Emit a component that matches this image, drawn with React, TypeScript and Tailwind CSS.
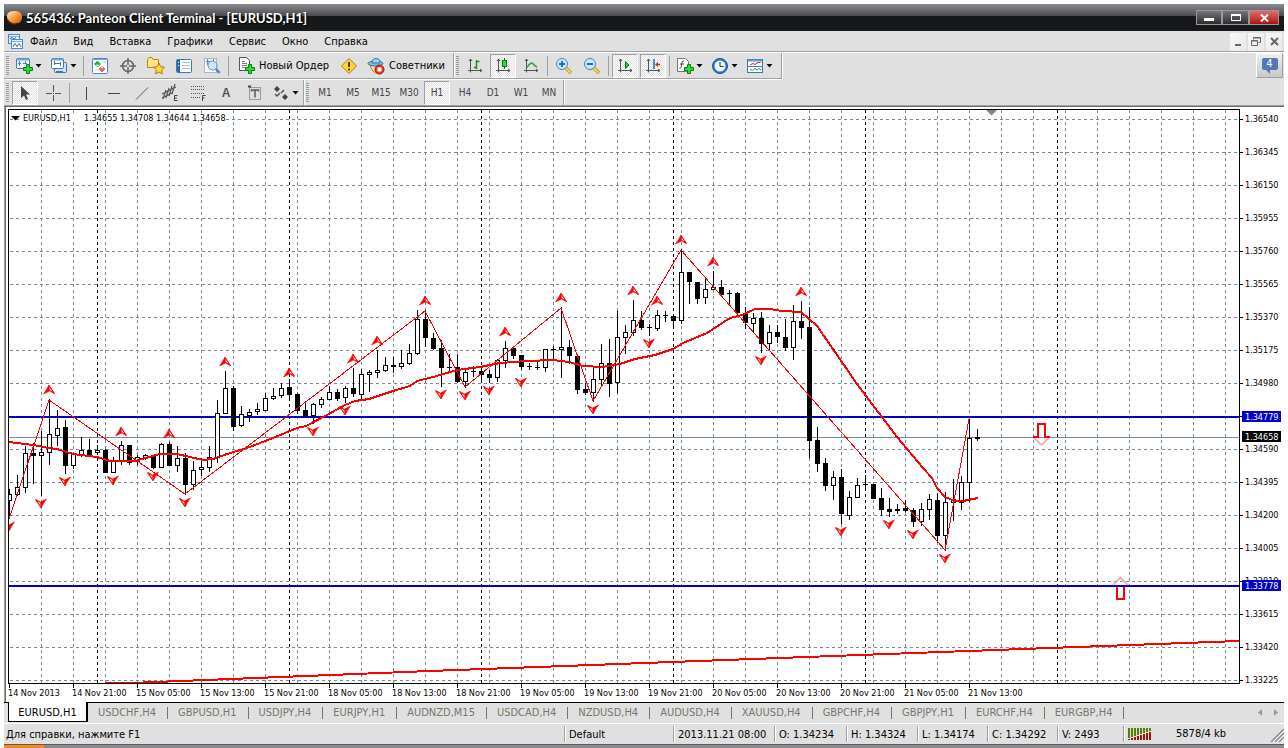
import type { ReactNode } from "react";

/* ── Chart data ─────────────────────────────────────────────────────── */

// One bar every 8px: [high, low, body top, body bottom, filled]
const CANDLES: [number, number, number, number, 0 | 1][] = [
  [489, 519, 494, 501, 0], [475, 496, 487, 495, 0], [446, 493, 453, 488, 0], [443, 484, 453, 456, 1],
  [431, 496, 452, 456, 0], [399, 465, 434, 453, 0], [410, 446, 428, 436, 0], [420, 474, 427, 466, 1],
  [454, 469, 454, 466, 0], [437, 457, 450, 455, 0], [439, 455, 450, 455, 1], [445, 454, 450, 453, 0],
  [449, 473, 450, 473, 1], [457, 473, 461, 473, 0], [441, 465, 445, 462, 0], [445, 465, 445, 463, 1],
  [455, 465, 457, 462, 0], [454, 460, 455, 458, 0], [455, 469, 455, 468, 1], [443, 468, 444, 468, 0],
  [442, 466, 444, 466, 1], [446, 472, 458, 466, 0], [453, 495, 458, 485, 1], [461, 490, 470, 485, 0],
  [458, 476, 467, 470, 0], [446, 472, 457, 468, 0], [400, 463, 413, 458, 0], [371, 414, 388, 414, 0],
  [386, 431, 388, 427, 1], [406, 427, 414, 426, 0], [409, 422, 412, 416, 0], [403, 415, 409, 412, 0],
  [393, 411, 398, 411, 0], [388, 400, 396, 399, 0], [383, 398, 388, 396, 0], [379, 401, 387, 395, 1],
  [393, 414, 394, 411, 1], [403, 417, 410, 416, 1], [403, 424, 404, 416, 0], [397, 408, 399, 405, 0],
  [386, 400, 392, 400, 0], [389, 401, 392, 399, 1], [386, 403, 388, 398, 0], [368, 397, 388, 394, 1],
  [369, 400, 374, 395, 0], [370, 392, 372, 375, 0], [350, 378, 370, 373, 0], [357, 372, 365, 371, 0],
  [357, 373, 365, 367, 1], [350, 369, 363, 367, 0], [344, 365, 353, 364, 0], [310, 355, 319, 354, 0],
  [310, 347, 319, 338, 1], [333, 350, 338, 349, 1], [340, 387, 348, 368, 1], [354, 372, 367, 368, 1],
  [354, 383, 367, 382, 1], [369, 388, 372, 382, 0], [366, 377, 371, 372, 1], [367, 382, 371, 375, 1],
  [370, 383, 374, 378, 1], [359, 382, 360, 378, 0], [341, 368, 348, 361, 0], [346, 359, 348, 356, 1],
  [355, 370, 355, 367, 1], [363, 370, 366, 367, 1], [360, 370, 367, 368, 1], [349, 372, 349, 368, 0],
  [346, 360, 349, 350, 1], [307, 378, 347, 350, 0], [340, 364, 347, 356, 1], [356, 394, 356, 390, 1],
  [383, 395, 389, 393, 1], [368, 402, 379, 393, 0], [344, 385, 363, 380, 0], [339, 397, 363, 384, 1],
  [311, 393, 337, 383, 0], [325, 354, 332, 338, 0], [300, 336, 320, 333, 0], [311, 330, 320, 328, 1],
  [324, 336, 327, 328, 1], [310, 331, 315, 329, 0], [311, 322, 315, 316, 1], [314, 327, 316, 321, 1],
  [249, 324, 272, 321, 0], [272, 304, 272, 282, 1], [282, 304, 282, 299, 1], [279, 304, 289, 298, 0],
  [271, 290, 287, 290, 0], [280, 296, 287, 295, 1], [290, 304, 293, 294, 1], [292, 315, 293, 313, 1],
  [307, 329, 313, 323, 1], [313, 333, 318, 324, 0], [312, 353, 318, 344, 1], [325, 350, 332, 344, 0],
  [325, 343, 332, 337, 1], [319, 351, 337, 348, 1], [305, 360, 321, 348, 0], [301, 339, 321, 328, 1],
  [307, 458, 327, 441, 1], [427, 472, 440, 464, 1], [458, 491, 463, 486, 1], [471, 500, 477, 486, 0],
  [469, 524, 477, 514, 1], [491, 520, 497, 516, 0], [478, 498, 485, 498, 0], [475, 489, 484, 485, 1],
  [484, 499, 484, 499, 1], [488, 516, 498, 510, 1], [498, 517, 509, 512, 1], [504, 514, 509, 511, 1],
  [500, 512, 508, 511, 1], [508, 527, 510, 522, 1], [503, 526, 509, 522, 0], [494, 520, 499, 510, 0],
  [493, 543, 500, 536, 1], [492, 551, 502, 536, 0], [479, 521, 499, 503, 0], [476, 510, 482, 503, 0],
  [419, 502, 438, 483, 0], [429, 441, 437, 439, 1],
];

// Fractals: [x, top]
const FRACTALS_UP = [
  [49, 385], [121, 427], [169, 429], [225, 357], [289, 368], [353, 354], [377, 336], [425, 296], [505, 327],
  [561, 293], [633, 286], [657, 296], [681, 235], [713, 257], [801, 287],
];
const FRACTALS_DOWN = [
  [9, 522], [41, 499], [65, 477], [113, 476], [153, 472], [185, 498], [313, 427], [345, 406], [441, 390], [465, 391],
  [489, 386], [521, 378], [593, 405], [649, 339], [761, 356], [841, 527], [889, 520], [913, 530], [945, 554],
];

const ZIGZAG = "9,519 49,400 185,494 425,311 465,387 561,308 593,401 681,250 945,550 969,419";
const MOVING_AVERAGE =
  "9,442 33,445 49,448 57,449 73,454 97,457 110,461 135,461 160,454 177,454 203,460 213,459 227,454 247,448 273,438 297,428 306,426 327,415 345,405 355,401 369,399 393,391 410,386 417,381 433,377 457,370 480,367 500,363 527,361 553,360 569,362 583,366 602,367 620,364 635,359 655,355 673,349 683,343 707,333 730,318 742,315 755,309 770,309 782,311 801,312 817,326 833,349 857,384 897,437 923,468 932,478 937,488 945,497 955,501 963,501 978,498";
const SLOW_AVERAGE = "105,683 131,683 430,671 860,655 1239,641";

const TIMES = [
  "14 Nov 2013", "14 Nov 21:00", "15 Nov 05:00", "15 Nov 13:00", "15 Nov 21:00", "18 Nov 05:00", "18 Nov 13:00",
  "18 Nov 21:00", "19 Nov 05:00", "19 Nov 13:00", "19 Nov 21:00", "20 Nov 05:00", "20 Nov 13:00", "20 Nov 21:00",
  "21 Nov 05:00", "21 Nov 13:00",
];

const LEVELS = [
  { y: 417, label: "1.34779", fill: "#0000c8" },
  { y: 437, label: "1.34658", fill: "#000000" },
  { y: 586, label: "1.33778", fill: "#0000c8" },
];

const range = (n: number) => Array.from({ length: n }, (_, i) => i);

function Chart() {
  return (
    <svg
      viewBox="4 107 1280 595"
      className="block h-auto w-full bg-white font-['DejaVu_Sans_Condensed','Noto_Sans',sans-serif] text-[9px]"
      role="img"
      aria-label="EURUSD,H1"
    >
      <defs>
        <clipPath id="plot">
          <rect x="9" y="110" width="1230" height="573" />
        </clipPath>
      </defs>

      <g shapeRendering="crispEdges">
        {/* grid */}
        <g stroke="#778899" strokeDasharray="3 3" fill="none">
          {range(38).map((i) => (
            <path key={i} d={`M${41.5 + 32 * i} 110V683`} />
          ))}
          {range(18).map((i) => (
            <path key={i} d={`M10 ${119.5 + 33 * i}H1239`} />
          ))}
        </g>
        <g stroke="#000" strokeDasharray="3 3">
          {range(6).map((i) => (
            <path key={i} d={`M${97.5 + 192 * i} 110V683`} />
          ))}
        </g>

        <g clipPath="url(#plot)">
          <path d="M9 437.5H1239" stroke="#778899" />
          <path d="M9 417H1239M9 586H1239" stroke="#0000c8" strokeWidth="2" />

          {CANDLES.map(([high, low, top, bottom, filled], i) => {
            const x = 9 + 8 * i;
            return (
              <g key={i}>
                <rect x={x} y={high} width="1" height={low - high} />
                <rect x={x - 2} y={top} width="5" height={Math.max(bottom - top, 1)} />
                {!filled && <rect x={x - 1} y={top + 1} width="3" height={bottom - top - 2} fill="#fff" />}
              </g>
            );
          })}

          <polyline points={ZIGZAG} fill="none" stroke="#f00" />
          <polyline points={MOVING_AVERAGE} fill="none" stroke="#f00" strokeWidth="2" />
          <polyline points={SLOW_AVERAGE} fill="none" stroke="#f00" strokeWidth="2" />
        </g>

        {/* frame and axis ticks */}
        <path d="M8.5 684V109.5H1239.5V683.5H8" fill="none" stroke="#000" />
        {TIMES.map((t, i) => (
          <path key={t} d={`M${9.5 + 64 * i} 684v4`} stroke="#000" />
        ))}
        {range(18).map((i) => (
          <path key={i} d={`M1240 ${119.5 + 33 * i}h3`} stroke="#000" />
        ))}
        <path d="M4.5 107V702" stroke="#a0a0a0" />
        <path d="M5.5 107V702" stroke="#6d6d64" />
      </g>

      {/* fractals */}
      <g clipPath="url(#plot)" fill="none" stroke="#f00">
        {FRACTALS_UP.map(([x, y]) => (
          <g key={`${x}-${y}`} transform={`translate(${x} ${y})`}>
            <path d="M0 0L-2.500 4.500L-5.500 9L.5 6Z" fill="#f00" strokeWidth=".6" />
            <path d="M0 .5L3 5L5.500 8.500L.5 5.500" strokeWidth="1.200" />
          </g>
        ))}
        {FRACTALS_DOWN.map(([x, y]) => (
          <g key={`${x}-${y}`} transform={`translate(${x} ${y})`}>
            <path d="M0 9L2.500 4.500L5.500 0L-.5 3Z" fill="#f00" strokeWidth=".6" />
            <path d="M0 8.500L-3 4L-5.500 .5L-.5 3.500" strokeWidth="1.200" />
          </g>
        ))}
      </g>

      {/* signal arrows */}
      <g fill="none">
        <path d="M1034 438L1041.500 445L1049 438" stroke="#ff9a9a" strokeWidth="1.500" />
        <path d="M1033 437H1038V424H1045V437H1050" stroke="#f00" strokeWidth="2" />
        <path d="M1113 585L1120.500 577.500L1128 585" stroke="#ff9a9a" strokeWidth="1.500" />
        <path d="M1117 587V599H1124V587" stroke="#f00" strokeWidth="2" />
      </g>
      <path d="M986 110H997L991.500 115.500Z" fill="#778899" />

      {/* labels */}
      <path d="M11 116H20L15.500 120.500Z" />
      <rect x="22" y="113" width="204" height="9" fill="#fff" />
      <text x="23" y="121">EURUSD,H1</text>
      <text x="84" y="121">1.34655 1.34708 1.34644 1.34658</text>
      {range(18).map((i) => (
        <text key={i} x="1245" y={122 + 33 * i}>
          {(1.3654 - 0.00195 * i).toFixed(5)}
        </text>
      ))}
      {LEVELS.map((level) => (
        <g key={level.label}>
          <rect x="1242" y={level.y - 6} width="39" height="11" fill={level.fill} />
          <text x="1245" y={level.y + 3} fill="#fff">
            {level.label}
          </text>
        </g>
      ))}
      {TIMES.map((t, i) => (
        <text key={t} x={8 + 64 * i} y="696">
          {t}
        </text>
      ))}
    </svg>
  );
}

/* ── Icons ──────────────────────────────────────────────────────────── */

function Icon({ children }: { children: ReactNode }) {
  return (
    <svg viewBox="0 0 18 18" className="size-[18px] shrink-0" fill="none" aria-hidden="true">
      {children}
    </svg>
  );
}

const GreenPlus = () => (
  <path d="M11.500 7.500H14.500V10.500H17.500V13.500H14.500V16.500H11.500V13.500H8.500V10.500H11.500Z" fill="#2fd83a" stroke="#0a7d12" />
);

const Axes = () => <path d="M4.500 2V15.500M2 13.500H16M3 4L4.500 2L6 4M14 12L16 13.500L14 15" stroke="#555" />;

const icons = {
  newChart: (
    <Icon>
      <rect x="1.500" y="1.500" width="13" height="10" rx="1" fill="#eef6ff" stroke="#3a78b8" />
      <path d="M2 2.500H14" stroke="#6fa8dc" strokeWidth="2" />
      <path d="M4.500 4V9M3 6.500H6M10.500 4V7M8 6.500H12" stroke="#5b7fa3" />
      <GreenPlus />
    </Icon>
  ),
  profiles: (
    <Icon>
      <rect x="4.500" y="5.500" width="12" height="10" rx="1" fill="#cfe2f6" stroke="#3a78b8" />
      <rect x="1.500" y="1.500" width="12" height="10" rx="1" fill="#fff" stroke="#3a78b8" />
      <path d="M2 2.500H13" stroke="#6fa8dc" strokeWidth="2" />
      <path d="M4.500 4V8M4 6.500H10.500M10.500 5V9M6 14.500H13" stroke="#4a77a5" />
    </Icon>
  ),
  marketWatch: (
    <Icon>
      <rect x="1.500" y="1.500" width="15" height="15" rx="1" fill="#fff" stroke="#4a86c5" />
      <path d="M2 2.500H16" stroke="#6fa8dc" />
      <path d="M6.500 4L9.500 7L6.500 10L3.500 7Z" fill="#1fae2c" stroke="#0d7a18" strokeWidth=".5" />
      <path d="M11 15L14 12L11 9L8 12Z" fill="#f0703a" stroke="#b23a10" strokeWidth=".5" />
      <path d="M5.500 7.500H7.500V9.500H5.500ZM10 9.500H12V11H10Z" fill="#fff" />
      <path d="M12 5H15M4 13H7" stroke="#b8c8d8" />
    </Icon>
  ),
  dataWindow: (
    <Icon>
      <circle cx="9" cy="9" r="5.500" stroke="#666" strokeWidth="1.500" />
      <path d="M9 1V8M9 10V17M1 9H8M10 9H17" stroke="#666" strokeWidth="1.500" />
    </Icon>
  ),
  navigator: (
    <Icon>
      <path d="M.5 2.500L2 .5H5L6 2.500H11.500V10.500H.5Z" fill="#ffe588" stroke="#b58b1c" />
      <path d="M12 6L13.700 9.700L17.500 10.200L14.700 12.900L15.400 16.900L12 15L8.600 16.900L9.300 12.900L6.500 10.200L10.300 9.700Z" fill="#ffd83c" stroke="#a97b12" />
    </Icon>
  ),
  terminal: (
    <Icon>
      <rect x="1.500" y="2.500" width="15" height="13" rx="1" fill="#fff" stroke="#3a78b8" />
      <rect x="2" y="3" width="3" height="12" fill="#2a66b0" />
      <path d="M7 5.500H15M7 8.500H15M7 11.500H15" stroke="#9cc0e8" />
      <path d="M3 5.500H4M3 8.500H4" stroke="#fff" />
    </Icon>
  ),
  tester: (
    <Icon>
      <rect x="1.500" y="1.500" width="12" height="14" fill="#f6f9fc" stroke="#a9b6c4" />
      <path d="M4.500 2V8M10.500 2V6M3 4.500H7" stroke="#6c8aa8" />
      <circle cx="9.500" cy="8.500" r="4.500" fill="#cfe6fa" stroke="#5f8fbe" />
      <path d="M13 12L16.500 16" stroke="#4d86c2" strokeWidth="2.500" />
    </Icon>
  ),
  newOrder: (
    <Icon>
      <path d="M2.500 .5H9.500L12.500 3.500V13.500H2.500Z" fill="#fff" stroke="#555" />
      <path d="M5 4.500H8M5 6.500H10M5 8.500H10M5 10.500H8" stroke="#777" />
      <GreenPlus />
    </Icon>
  ),
  warning: (
    <Icon>
      <path d="M9 1.500L16.500 9L9 16.500L1.500 9Z" fill="#ffd42e" stroke="#a97f10" strokeLinejoin="round" />
      <path d="M9 5V10M9 11.500V13.500" stroke="#4f3a00" strokeWidth="2" />
    </Icon>
  ),
  expert: (
    <Icon>
      <path d="M3 8H14L13 14L9 16.500L5 13Z" fill="#ffe08a" stroke="#b98a1c" />
      <ellipse cx="8.500" cy="6.500" rx="7.500" ry="2.500" fill="#7fbce6" stroke="#2f78ae" />
      <path d="M5 6C5 3 6 1.500 9 1.500S13 3 13 6Z" fill="#9fd0f2" stroke="#2f78ae" />
      <circle cx="12.500" cy="12.500" r="4.500" fill="#e23a22" stroke="#a51d0c" />
      <rect x="10.500" y="10.500" width="4" height="4" fill="#fff" />
    </Icon>
  ),
  bars: (
    <Icon>
      <Axes />
      <path d="M10.500 3V12M8 10.500H10M11 4.500H13.500" stroke="#1c8a28" strokeWidth="1.500" />
    </Icon>
  ),
  candles: (
    <Icon>
      <Axes />
      <path d="M10.500 1V12" stroke="#0a6a14" />
      <rect x="8.500" y="3.500" width="4" height="6" fill="#35d640" stroke="#0a7d12" />
    </Icon>
  ),
  line: (
    <Icon>
      <Axes />
      <path d="M4 11C7 9 8 5 10 6S12 9 15 10" stroke="#2f9a3a" strokeWidth="1.500" />
    </Icon>
  ),
  zoomIn: (
    <Icon>
      <path d="M11 11L16 16" stroke="#c99a16" strokeWidth="3.500" />
      <path d="M11 11L15.500 15.500" stroke="#ffe27a" strokeWidth="1.500" />
      <circle cx="7" cy="7" r="5.500" fill="#cbe8fb" stroke="#3f86c0" />
      <path d="M7 4V10M4 7H10" stroke="#2a6ea8" strokeWidth="2" />
    </Icon>
  ),
  zoomOut: (
    <Icon>
      <path d="M11 11L16 16" stroke="#c99a16" strokeWidth="3.500" />
      <path d="M11 11L15.500 15.500" stroke="#ffe27a" strokeWidth="1.500" />
      <circle cx="7" cy="7" r="5.500" fill="#cbe8fb" stroke="#3f86c0" />
      <path d="M4 7H10" stroke="#2a6ea8" strokeWidth="2" />
    </Icon>
  ),
  autoScroll: (
    <Icon>
      <Axes />
      <path d="M9.500 4.500L13 8L9.500 11.500Z" fill="#2fc43a" stroke="#0a7d12" />
    </Icon>
  ),
  chartShift: (
    <Icon>
      <Axes />
      <path d="M10 2V12" stroke="#2468a8" strokeWidth="1.500" />
      <path d="M16 7.500H13" stroke="#b23a18" strokeWidth="1.500" />
      <path d="M11 7.500L14 5V10Z" fill="#b23a18" />
    </Icon>
  ),
  indicators: (
    <Icon>
      <path d="M1.500 1.500H9.500L12.500 4.500V14.500H1.500Z" fill="#fff" stroke="#777" />
      <path d="M8 4C6 3.500 6 5 5.500 8S5 11.500 3.500 11M4 7H8" stroke="#444" />
      <GreenPlus />
    </Icon>
  ),
  periods: (
    <Icon>
      <circle cx="9" cy="9" r="7.500" fill="#2c7cd6" stroke="#174f94" />
      <circle cx="9" cy="9" r="5.500" fill="#eef6ff" />
      <path d="M9 5V9.500H12.500" stroke="#333" />
    </Icon>
  ),
  templates: (
    <Icon>
      <rect x="1.500" y="2.500" width="15" height="13" fill="#fff" stroke="#3a78b8" />
      <path d="M2 3.500H16" stroke="#5a9ad8" strokeWidth="2" />
      <path d="M2 9.500H16" stroke="#3a78b8" />
      <path d="M4 8L7 6.500L9 7.500L12 5.500H14.500" stroke="#b03a20" />
      <path d="M4 12L6.500 13.500L9 11.500L11 13L13 11.500L15 13" stroke="#2f9a3a" />
    </Icon>
  ),
  cursor: (
    <Icon>
      <path d="M5 2V14L8 11.500L10 16L12 15L10 10.500H14Z" fill="#444" />
    </Icon>
  ),
  crosshair: (
    <Icon>
      <path d="M9.500 1V8M9.500 11V17M2 9.500H8M11 9.500H17M9 9.500H10" stroke="#555" />
    </Icon>
  ),
  vline: (
    <Icon>
      <path d="M9.500 3V16" stroke="#444" />
    </Icon>
  ),
  hline: (
    <Icon>
      <path d="M3 9.500H15" stroke="#444" />
    </Icon>
  ),
  trend: (
    <Icon>
      <path d="M3 15.500L15 3.500" stroke="#555" />
    </Icon>
  ),
  channel: (
    <Icon>
      <path d="M1 10L15 3M1 14L11 9M5 6L2 15M8 4L5 14M11 2L8 12M14 0L11 10" stroke="#555" strokeWidth="1.200" />
      <path d="M16.500 11.500H13.500V16.500H16.500M13.500 14H16" stroke="#444" />
    </Icon>
  ),
  fibo: (
    <Icon>
      <path d="M2 2.500H16M2 5.500H16M2 9.500H16M2 13.500H11" stroke="#555" strokeDasharray="1 1" />
      <path d="M16.500 11.500H13.500V17M13.500 14H15.500" stroke="#444" />
    </Icon>
  ),
  label: (
    <Icon>
      <rect x="4.500" y="3.500" width="11" height="12" stroke="#555" strokeDasharray="1 1" />
      <path d="M6.500 7.500V6H13.500V7.500M10 6V13.500" stroke="#555" strokeWidth="1.500" />
      <path d="M3 2.500H6" stroke="#444" strokeWidth="2" />
    </Icon>
  ),
  arrows: (
    <Icon>
      <path d="M5 2L8 5L5 8L2 5ZM13 10L16 13L13 16L10 13Z" fill="#444" />
      <path d="M3 10L5 12L8 9M9 9L12 6" stroke="#555" strokeWidth="1.500" />
    </Icon>
  ),
};

type IconName = keyof typeof icons;

/* ── Toolbar parts ──────────────────────────────────────────────────── */

function Grip() {
  return (
    <div className="mr-0.5 ml-0.5 h-5 w-[3px] bg-[repeating-linear-gradient(to_bottom,#9a9a9a_0_1px,transparent_1px_2px)]" />
  );
}

function Separator() {
  return <div className="mx-0.5 h-5 w-px bg-[#a0a0a0]" />;
}

const pressedStyle =
  "border border-t-[#a0a0a0] border-r-white border-b-white border-l-[#a0a0a0] bg-[repeating-conic-gradient(#fff_0_25%,#e0e0e0_0_50%)] bg-[length:2px_2px]";

function Tool({ name, title, pressed }: { name: IconName; title: string; pressed?: boolean }) {
  return (
    <button
      aria-label={title}
      className={`mx-px flex h-6 w-[26px] items-center justify-center ${pressed ? pressedStyle : ""}`}
    >
      {icons[name]}
    </button>
  );
}

function DropTool({ name, title }: { name: IconName; title: string }) {
  return (
    <button aria-label={title} className="flex h-6 w-[35px] items-center gap-0.5 pl-1">
      {icons[name]}
      <svg viewBox="0 0 7 4" className="h-1 w-[7px]" aria-hidden="true">
        <path d="M.5 0H6.500L3.500 3.500Z" fill="#000" />
      </svg>
    </button>
  );
}

function Band({ children, last }: { children: ReactNode; last?: boolean }) {
  return (
    <div
      className={`flex items-center border-r border-[#a0a0a0] shadow-[1px_0_0_#fff] ${
        last ? "h-[25px]" : "h-[26px] border-b pr-1 shadow-[1px_1px_0_#fff]"
      }`}
    >
      {children}
    </div>
  );
}

const MENU = ["Файл", "Вид", "Вставка", "Графики", "Сервис", "Окно", "Справка"];
const TIMEFRAMES = ["M1", "M5", "M15", "M30", "H1", "H4", "D1", "W1", "MN"];
const TABS = [
  "USDCHF,H4", "GBPUSD,H1", "USDJPY,H4", "EURJPY,H1", "AUDNZD,M15", "USDCAD,H4", "NZDUSD,H4", "AUDUSD,H4",
  "XAUUSD,H4", "GBPCHF,H4", "GBPJPY,H1", "EURCHF,H4", "EURGBP,H4",
];

function TitleBar() {
  const button = "flex h-[15px] items-center justify-center border border-[#9a9a9c]";
  return (
    <header className="flex h-[27px] items-center bg-linear-to-b from-[#8c8d90] from-0% via-[#4a4b4e] via-45% to-[#17181a] to-46% pr-[5px] pl-0.5">
      <svg viewBox="0 0 18 18" className="size-[18px]" aria-hidden="true">
        <defs>
          <linearGradient id="logo" x1="0" y1="0" x2="1" y2="1">
            <stop offset="0" stopColor="#fff0d8" />
            <stop offset=".5" stopColor="#f59a3c" />
            <stop offset="1" stopColor="#c4560c" />
          </linearGradient>
        </defs>
        <path d="M1 7C1 3 5 2 9 2S16 4 16 8S14 14 10 15S1 13 1 7Z" fill="url(#logo)" />
        <path d="M1 10C3 15 9 16 12 14" stroke="#5b2605" strokeWidth="1.500" fill="none" />
      </svg>
      <h1 className="ml-0.5 flex-1 font-['Lato','DejaVu_Sans_Condensed',sans-serif] text-[13px] leading-4 font-bold text-white [text-shadow:1px_1px_1px_#000]">
        565436: Panteon Client Terminal - [EURUSD,H1]
      </h1>
      <div className="flex">
        <button aria-label="Свернуть" className={`${button} w-[26px] bg-linear-to-b from-[#77787b] to-[#2b2c2e]`}>
          <span className="mt-1 h-[3px] w-2.5 bg-white" />
        </button>
        <button aria-label="Развернуть" className={`${button} w-[27px] bg-linear-to-b from-[#77787b] to-[#2b2c2e]`}>
          <span className="h-[7px] w-2.5 border border-t-2 border-white" />
        </button>
        <button aria-label="Закрыть" className={`${button} w-[30px] bg-linear-to-b from-[#e06a6a] to-[#a80c0c]`}>
          <svg viewBox="0 0 9 8" className="h-2 w-[9px]" aria-hidden="true">
            <path d="M1 .5L8 7.500M8 .5L1 7.500" stroke="#fff" strokeWidth="2" />
          </svg>
        </button>
      </div>
    </header>
  );
}

function MenuBar() {
  const button = "flex h-[18px] w-4 items-center justify-center bg-linear-to-br from-[#f8f8f8] to-[#e8e8e8]";
  return (
    <div className="flex h-[22px] items-center border-b border-white pr-0.5 pl-1 shadow-[inset_0_-1px_0_#a0a0a0]">
      <svg viewBox="0 0 16 16" className="size-4" fill="none" aria-hidden="true">
        <rect x=".5" y=".5" width="11" height="9" fill="#e8f2fe" stroke="#4a8ad8" />
        <rect x="3.500" y="5.500" width="11" height="9" fill="#fff" stroke="#4a8ad8" />
        <path d="M1 2.500H11M4 7.500H14" stroke="#7ab0ee" />
        <path d="M2 5L4 3.500L6 5L8 3.500M5 13L7 9.500L9 12.500L11 9.500L13 13" stroke="#2f6fc0" />
      </svg>
      <nav className="ml-1.5 flex flex-1 gap-4">
        {MENU.map((item) => (
          <button key={item} className="leading-4">
            {item}
          </button>
        ))}
      </nav>
      <div className="flex gap-0.5">
        <button aria-label="Свернуть окно" className={button}>
          <span className="mt-1.5 h-0.5 w-1.5 bg-[#666]" />
        </button>
        <button aria-label="Восстановить окно" className={button}>
          <svg viewBox="0 0 10 9" className="h-[9px] w-2.5" fill="none" aria-hidden="true">
            <path d="M2.500 2.500V.5H9.500V5.500H7.500M.5 3.500H6.500V8.500H.5ZM3 1H9M1 4H6" stroke="#666" />
          </svg>
        </button>
        <button aria-label="Закрыть окно" className={button}>
          <svg viewBox="0 0 9 9" className="size-[9px]" aria-hidden="true">
            <path d="M1 1L8 8M8 1L1 8" stroke="#666" strokeWidth="2" />
          </svg>
        </button>
      </div>
    </div>
  );
}

function Toolbars() {
  return (
    <div>
      <div className="flex h-[27px] items-start justify-between">
        <div className="flex">
          <Band>
            <Grip />
            <DropTool name="newChart" title="Новый график" />
            <DropTool name="profiles" title="Профили" />
            <Separator />
            <Tool name="marketWatch" title="Обзор рынка" />
            <Tool name="dataWindow" title="Окно данных" />
            <Tool name="navigator" title="Навигатор" />
            <Tool name="terminal" title="Терминал" />
            <Tool name="tester" title="Тестер стратегий" />
            <Separator />
            <button className="flex h-6 items-center gap-1 px-1.5 pt-px leading-4">
              {icons.newOrder}
              <span>Новый Ордер</span>
            </button>
            <Tool name="warning" title="Предупреждение" />
            <button className="flex h-6 items-center gap-1 px-1 pt-px leading-4">
              {icons.expert}
              <span>Советники</span>
            </button>
          </Band>
          <Band>
            <Grip />
            <Tool name="bars" title="Бары" />
            <Tool name="candles" title="Японские свечи" pressed />
            <Tool name="line" title="Линия" />
            <Separator />
            <Tool name="zoomIn" title="Увеличить" />
            <Tool name="zoomOut" title="Уменьшить" />
            <Separator />
            <Tool name="autoScroll" title="Автопрокрутка" pressed />
            <Tool name="chartShift" title="Сдвиг графика" pressed />
            <Separator />
            <DropTool name="indicators" title="Индикаторы" />
            <DropTool name="periods" title="Периоды" />
            <DropTool name="templates" title="Шаблоны" />
          </Band>
        </div>
        <button
          aria-label="Сообщения"
          className="mr-px flex h-[25px] w-[27px] justify-center border border-white border-r-[#a0a0a0] border-b-[#a0a0a0] bg-linear-to-b from-[#efefef] to-[#c8c8c8] pt-1"
        >
          <span className="relative flex h-3 w-4 items-center justify-center rounded-xs bg-[#5577b3] text-[11px] text-white">
            4
            <svg viewBox="0 0 5 4" className="absolute top-3 left-1 h-1 w-[5px]" aria-hidden="true">
              <path d="M0 0H4V4Z" fill="#5577b3" />
            </svg>
          </span>
        </button>
      </div>
      <div className="flex h-[25px]">
        <Band last>
          <Grip />
          <Tool name="cursor" title="Курсор" pressed />
          <Tool name="crosshair" title="Перекрестие" />
          <Separator />
          <Tool name="vline" title="Вертикальная линия" />
          <Tool name="hline" title="Горизонтальная линия" />
          <Tool name="trend" title="Трендовая линия" />
          <Tool name="channel" title="Равноудаленный канал" />
          <Tool name="fibo" title="Линии Фибоначчи" />
          <button className="mx-px h-6 w-[26px] font-['Liberation_Sans',sans-serif] text-[12px] font-bold text-[#555]">
            A
          </button>
          <Tool name="label" title="Текстовая метка" />
          <DropTool name="arrows" title="Стрелки" />
        </Band>
        <Band last>
          <Grip />
          {TIMEFRAMES.map((tf) => (
            <button
              key={tf}
              className={`mx-px h-6 w-[26px] pt-px text-center text-[10px] leading-4 text-[#444] ${tf === "H1" ? pressedStyle : ""}`}
            >
              {tf}
            </button>
          ))}
        </Band>
      </div>
      <div className="h-0.5 border-t border-[#a0a0a0] bg-[#6d6d64]" />
    </div>
  );
}

function ChartTabs() {
  return (
    <nav className="flex h-[22px] items-start border-b border-white">
      <div className="h-px w-1 bg-black" />
      <button className="h-5 w-20 border border-t-0 border-r-2 border-black bg-white pt-0.5 leading-4">EURUSD,H1</button>
      <div className="flex h-5 flex-1 items-center border-t border-black text-[#77766c]">
        {TABS.map((tab) => (
          <button key={tab} className="h-3 border-r border-[#77766c] pr-[11px] pl-2.5 leading-3">
            {tab}
          </button>
        ))}
        <div className="ml-auto flex gap-3 pr-1.5">
          <button aria-label="Назад">
            <svg viewBox="0 0 4 7" className="h-[7px] w-1" aria-hidden="true">
              <path d="M4 0V7L0 3.500Z" fill="#999" />
            </svg>
          </button>
          <button aria-label="Вперёд">
            <svg viewBox="0 0 4 7" className="h-[7px] w-1" aria-hidden="true">
              <path d="M0 0V7L4 3.500Z" fill="#999" />
            </svg>
          </button>
        </div>
      </div>
    </nav>
  );
}

function StatusBar() {
  const cell = "h-4 border-l border-[#a0a0a0] pl-1 leading-[18px] shadow-[inset_1px_0_0_#fff]";
  return (
    <footer className="flex h-5 items-center">
      <div className="h-4 flex-1 pl-0.5 leading-[18px]">Для справки, нажмите F1</div>
      <div className={`${cell} w-[109px]`}>Default</div>
      <div className={`${cell} w-[101px]`}>2013.11.21 08:00</div>
      <div className={`${cell} w-[72px]`}>O: 1.34234</div>
      <div className={`${cell} w-[71px]`}>H: 1.34324</div>
      <div className={`${cell} w-[70px]`}>L: 1.34174</div>
      <div className={`${cell} w-[70px]`}>C: 1.34292</div>
      <div className={`${cell} w-[66px]`}>V: 2493</div>
      <div className={`${cell} flex w-[161px] items-center`}>
        <svg viewBox="0 0 24 12" className="h-3 w-6" aria-hidden="true">
          {range(8).map((i) => (
            <g key={i}>
              <rect x={i * 3} y="0" width="2" height={10 - i} fill="#5a7d0a" />
              <rect x={i * 3} y={11 - i} width="2" height={1 + i} fill="#a01808" />
            </g>
          ))}
        </svg>
        <span className="ml-6 flex-1">5878/4 kb</span>
        <svg viewBox="0 0 14 14" className="size-3.5 self-end" aria-hidden="true">
          <path d="M1 14L14 1M5 14L14 5M9 14L14 9" stroke="#8a8a8a" strokeWidth="1.500" />
          <path d="M3 14L14 3M7 14L14 7M11 14L14 11" stroke="#fff" />
        </svg>
      </div>
    </footer>
  );
}

export default function App() {
  return (
    <div className="bg-white px-1 pt-1 font-['DejaVu_Sans_Condensed','Noto_Sans',sans-serif] text-[11px] text-black">
      <TitleBar />
      <main className="bg-[#e0e0e0]">
        <MenuBar />
        <Toolbars />
        <Chart />
        <ChartTabs />
        <StatusBar />
      </main>
      <div className="flex h-1 border-t border-[#5a5a5c] bg-[#8a8b8f]">
        <div className="w-10 bg-[#f58a1f]" />
      </div>
    </div>
  );
}
